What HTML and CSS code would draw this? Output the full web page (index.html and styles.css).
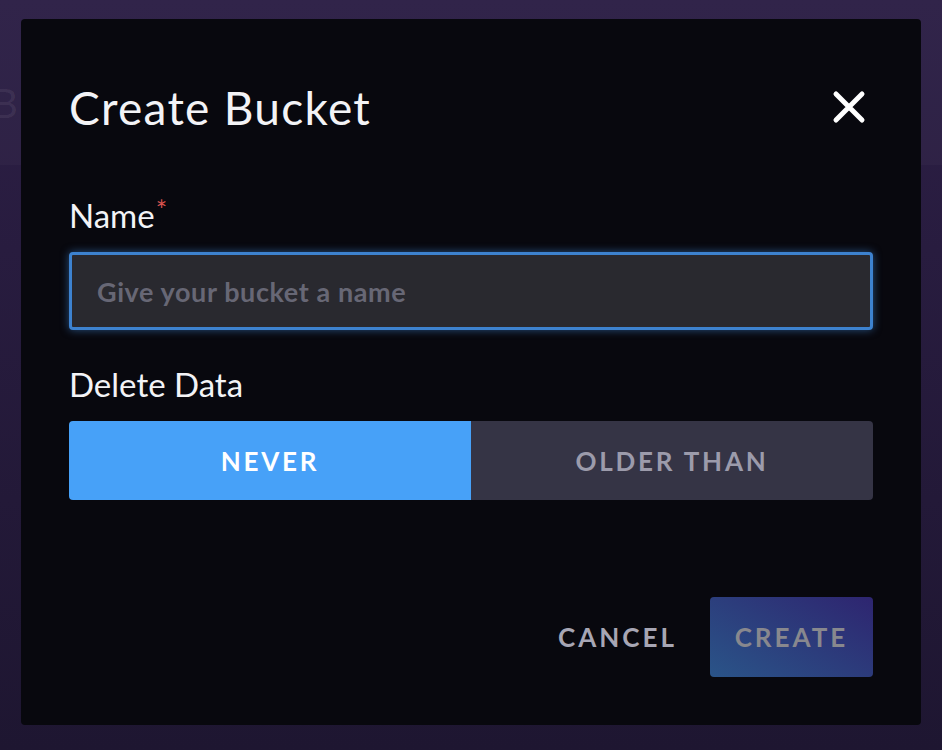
FILE: index.html
```html
<!DOCTYPE html>
<html lang="en">
<head>
  <meta charset="UTF-8" />
  <meta name="viewport" content="width=device-width, initial-scale=1" />
  <title>Create Bucket</title>
  <link rel="stylesheet" href="styles.css">
</head>
<body>

<div class="page-header">
  <span class="page-title">Buckets</span>
</div>

<div class="overlay">
  <div class="modal">
    <div class="modal-header">
      <h1>Create Bucket</h1>
      <button class="close-btn" aria-label="Close">
        <svg width="34" height="34" viewBox="0 0 34 34">
          <path d="M4 4 L30 30 M30 4 L4 30" stroke="#fff" stroke-width="5" stroke-linecap="round" fill="none"/>
        </svg>
      </button>
    </div>

    <form class="modal-body">
      <label class="field-label">Name<span class="required">*</span></label>
      <input type="text" class="text-input" placeholder="Give your bucket a name">

      <label class="field-label">Delete Data</label>
      <div class="toggle">
        <button type="button" class="toggle-btn active">NEVER</button>
        <button type="button" class="toggle-btn">OLDER THAN</button>
      </div>
    </form>

    <div class="modal-footer">
      <button class="btn-cancel">CANCEL</button>
      <button class="btn-create" disabled>CREATE</button>
    </div>
  </div>
</div>

</body>
</html>
```

FILE: styles.css
```css
body {
  margin: 0;
  height: 750px;
  overflow: hidden;
  font-family: Lato, "Open Sans", sans-serif;
  background: linear-gradient(180deg, #2d1f46, #1e1631);
  color: #fff;
}
.page-header {
  height: 165px;
  background: rgba(255, 255, 255, 0.025);
  display: flex;
  align-items: center;
}
.page-title {
  font-size: 40px;
  color: rgba(255, 255, 255, 0.07);
  margin-left: -8px;
  letter-spacing: 6px;
  margin-top: 40px;
}
.overlay {
  position: fixed;
  top: 0; left: 0; right: 0; bottom: 0;
  display: flex;
  justify-content: center;
  align-items: flex-start;
  padding-top: 19px;
}
.modal {
  width: 900px;
  height: 706px;
  box-sizing: border-box;
  background: #08080e;
  border-radius: 4px;
  padding: 0 48px;
  display: flex;
  flex-direction: column;
}
.modal-header {
  display: flex;
  align-items: center;
  justify-content: space-between;
  height: 176px;
}
.modal-header h1 {
  margin: 0;
  font-size: 46px;
  font-weight: 400;
  letter-spacing: 1.3px;
  color: #f3f3f6;
}
.close-btn {
  background: none;
  border: none;
  padding: 0;
  margin-right: 7px;
  cursor: pointer;
  display: flex;
}
.modal-body {
  display: flex;
  flex-direction: column;
}
.field-label {
  font-size: 33px;
  line-height: 40px;
  color: #f3f3f6;
  margin-bottom: 17px;
}
.required {
  color: #d9534f;
  font-size: 27px;
  vertical-align: top;
  line-height: 30px;
  margin-left: 1px;
}
.text-input {
  height: 78px;
  box-sizing: border-box;
  border: 3px solid #3d82cf;
  border-radius: 4px;
  background: #29292f;
  box-shadow: 0 0 8px rgba(61, 130, 207, 0.6);
  padding: 0 25px;
  font-family: inherit;
  font-size: 27px;
  font-weight: 700;
  letter-spacing: 0.6px;
  color: #fff;
  outline: none;
  margin-bottom: 34px;
}
.text-input::placeholder {
  color: #676775;
}
.toggle {
  display: flex;
  height: 79px;
  border-radius: 4px;
  overflow: hidden;
}
.toggle-btn {
  flex: 1;
  border: none;
  background: #353445;
  color: #9c9bab;
  font-family: inherit;
  font-size: 26px;
  font-weight: 700;
  letter-spacing: 2.8px;
  cursor: pointer;
}
.toggle-btn.active {
  background: #47a1f8;
  color: #fff;
}
.modal-footer {
  display: flex;
  justify-content: flex-end;
  align-items: center;
  margin-top: 97px;
  gap: 33px;
}
.btn-cancel {
  background: none;
  border: none;
  color: #a7a6b4;
  font-family: inherit;
  font-size: 26px;
  font-weight: 700;
  letter-spacing: 3px;
  cursor: pointer;
  padding: 0;
}
.btn-create {
  width: 163px;
  height: 80px;
  border: none;
  border-radius: 4px;
  background: linear-gradient(30deg, #2a5488, #2e2570);
  color: #88888e;
  font-family: inherit;
  font-size: 26px;
  font-weight: 700;
  letter-spacing: 3px;
}
```
